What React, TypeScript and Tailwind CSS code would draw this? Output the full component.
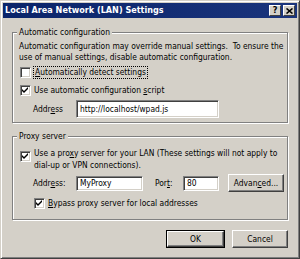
import React from "react";

const font = { fontFamily: '"DejaVu Sans Condensed", "DejaVu Sans", sans-serif' };

function Check({ checked }: { checked: boolean }) {
  return (
    <div className="w-[11px] h-[11px] shrink-0 bg-white border border-t-[#808080] border-l-[#808080] border-b-white border-r-white shadow-[inset_1px_1px_0_#404040,inset_-1px_-1px_0_#d4d0c8] flex items-center justify-center">
      {checked && (
        <svg width="7" height="7" viewBox="0 0 7 7">
          <path d="M0 2 L2 4 L6 0 L6 2 L2 6 L0 4 Z" fill="#000" />
        </svg>
      )}
    </div>
  );
}

function Field({ value, w, h }: { value: string; w: string; h: string }) {
  return (
    <div className={`${w} ${h} shrink-0 bg-white border border-t-[#808080] border-l-[#808080] border-b-white border-r-white shadow-[inset_1px_1px_0_#404040,inset_-1px_-1px_0_#d4d0c8] flex items-center pl-[3px] text-black whitespace-nowrap`}>
      {value}
    </div>
  );
}

function Btn({ children, cls, def }: { children: React.ReactNode; cls: string; def?: boolean }) {
  return (
    <div className={`${cls} ${def ? "border border-black" : ""} flex shrink-0`}>
      <div className="flex-1 bg-[#d4d0c8] border border-t-white border-l-white border-b-[#404040] border-r-[#404040] shadow-[inset_-1px_-1px_0_#808080] flex items-center justify-center text-black whitespace-nowrap">
        {children}
      </div>
    </div>
  );
}

function Group({ title, cls, children }: { title: string; cls: string; children: React.ReactNode }) {
  return (
    <div className={`relative border border-[#808080] shadow-[inset_1px_1px_0_#fff,1px_1px_0_#fff] ${cls}`}>
      <div className="absolute left-[4px] top-[-6px] px-[2px] bg-[#d4d0c8] leading-[11px] whitespace-nowrap">{title}</div>
      {children}
    </div>
  );
}

export default function App() {
  return (
    <div style={font} className="w-[300px] h-[259px] bg-[#d4d0c8] border border-t-[#d4d0c8] border-l-[#d4d0c8] border-b-[#404040] border-r-[#404040] shadow-[inset_1px_1px_0_#fff,inset_-1px_-1px_0_#808080] p-[2px] flex flex-col text-[8.4px] text-black leading-[11px]">
      <div className="h-[15px] shrink-0 bg-[linear-gradient(90deg,#0a246a,#1a347c)] flex items-center justify-between pl-[2px] pr-[2px]">
        <span className="text-white font-bold text-[9px] whitespace-nowrap">Local Area Network (LAN) Settings</span>
        <div className="flex gap-[2px]">
          <div className="w-[12px] h-[11px] bg-[#d4d0c8] border border-t-white border-l-white border-b-[#404040] border-r-[#404040] flex items-center justify-center font-bold text-[9px] leading-none">?</div>
          <div className="w-[12px] h-[11px] bg-[#d4d0c8] border border-t-white border-l-white border-b-[#404040] border-r-[#404040] flex items-center justify-center">
            <svg width="7" height="6" viewBox="0 0 7 6"><path d="M0.5 0.5 L6.5 5.5 M6.5 0.5 L0.5 5.5" stroke="#000" strokeWidth="1.6" /></svg>
          </div>
        </div>
      </div>

      <div className="px-[9px] pt-[14px] flex flex-col">
        <Group title="Automatic configuration" cls="h-[91px] pl-[6px] pt-[8px]">
          <div className="whitespace-nowrap">
            <div>Automatic configuration may override manual settings.&nbsp; To ensure the</div>
            <div>use of manual settings, disable automatic configuration.</div>
          </div>
          <div className="flex items-center gap-[2px] mt-[3px] ml-[1px] h-[13px]">
            <Check checked={false} />
            <span className="border border-dotted border-black px-[1px] leading-[11px] whitespace-nowrap"><u>A</u>utomatically detect settings</span>
          </div>
          <div className="flex items-center gap-[3px] mt-[5px] ml-[1px] h-[13px]">
            <Check checked={true} />
            <span className="whitespace-nowrap">Use automatic configuration <u>s</u>cript</span>
          </div>
          <div className="flex items-center mt-[3px] ml-[14px]">
            <span className="w-[43px]">Addr<u>e</u>ss</span>
            <Field value="http://localhost/wpad.js" w="w-[143px]" h="h-[18px]" />
          </div>
        </Group>

        <Group title="Proxy server" cls="mt-[13px] h-[84px] pl-[6px] pt-[10px]">
          <div className="flex items-start gap-[3px] ml-[1px]">
            <div className="mt-[4px]"><Check checked={true} /></div>
            <div className="leading-[12px] whitespace-nowrap">
              <div>Use a pro<u>x</u>y server for your LAN (These settings will not apply to</div>
              <div>dial-up or VPN connections).</div>
            </div>
          </div>
          <div className="flex items-center mt-[3px] ml-[14px] h-[18px]">
            <span className="w-[43px]">Addr<u>e</u>ss:</span>
            <Field value="MyProxy" w="w-[67px]" h="h-[15px]" />
            <span className="ml-[12px] w-[28px]">Por<u>t</u>:</span>
            <Field value="80" w="w-[36px]" h="h-[15px]" />
            <Btn cls="ml-[9px] w-[56px] h-[18px]">Advan<u>c</u>ed...</Btn>
          </div>
          <div className="flex items-center gap-[3px] mt-[5px] ml-[15px] h-[13px]">
            <Check checked={true} />
            <span className="whitespace-nowrap"><u>B</u>ypass proxy server for local addresses</span>
          </div>
        </Group>

        <div className="flex justify-end gap-[7px] mt-[10px]">
          <Btn cls="w-[59px] h-[18px]" def>OK</Btn>
          <Btn cls="w-[56px] h-[18px]">Cancel</Btn>
        </div>
      </div>
    </div>
  );
}
